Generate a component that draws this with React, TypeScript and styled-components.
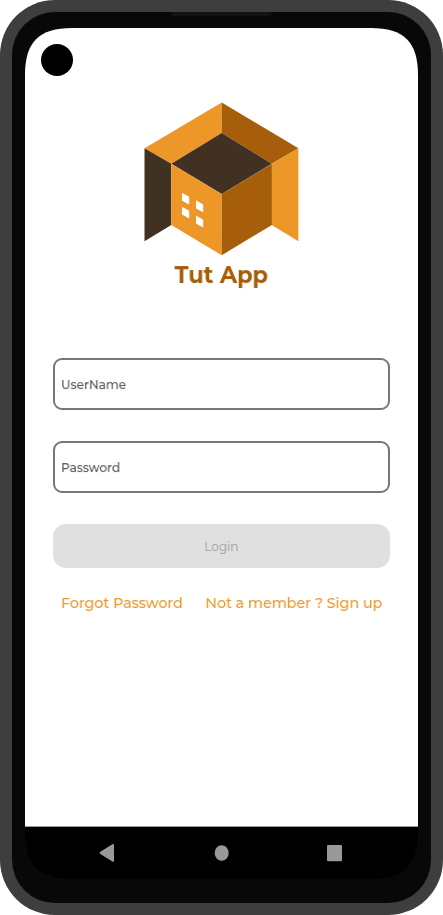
import React from "react";
import styled, { createGlobalStyle } from "styled-components";

const GlobalStyle = createGlobalStyle`
  *, *::before, *::after { box-sizing: border-box; }
  body { margin: 0; background: #fff; overflow: hidden; }
  button, input { font: inherit; margin: 0; }
`;

const Device = styled.div`
  position: relative;
  width: 443px;
  height: 915px;
  padding: 12px;
  border-radius: 55px;
  background: #3e3e3e;
  font-family: Montserrat, Inter, sans-serif;
`;

const Bezel = styled.div`
  height: 891px;
  padding: 16px 13px 24px;
  border-radius: 43px;
  background: #080808;
`;

const Speaker = styled.div`
  position: absolute;
  top: 12px;
  left: 170px;
  width: 103px;
  height: 4px;
  background: #121212;
  clip-path: polygon(0 0, 100% 0, calc(100% - 3px) 100%, 3px 100%);
`;

const Screen = styled.main`
  display: flex;
  flex-direction: column;
  height: 851px;
  clip-path: path("M0 47C0 14 14 0 47 0H346C379 0 393 14 393 47V804C393 837 379 851 346 851H47C14 851 0 837 0 804Z");
`;

const Camera = styled.div`
  position: absolute;
  top: 44px;
  left: 41px;
  width: 32px;
  height: 32px;
  border-radius: 50%;
  background: #000;
`;

const Content = styled.div`
  flex: 1;
  display: flex;
  flex-direction: column;
  padding: 74px 28px 0;
  background: #fff;
`;

const Logo = styled.svg`
  display: block;
  align-self: center;
  width: 155px;
  height: 154px;
`;

/* Slightly condensed lettering, anchored at the side it is aligned to. */
const Condensed = styled.span<{ $origin?: "left" | "center" | "right" }>`
  display: inline-block;
  white-space: nowrap;
  transform: scaleX(0.93);
  transform-origin: ${(p) => p.$origin ?? "center"} center;
  will-change: transform;
`;

const Title = styled.h1`
  margin: 4px 1px 0 0;
  height: 30px;
  text-align: center;
  font-size: 24.2px;
  line-height: 30px;
  font-weight: 700;
  color: #a65e0a;
`;

const Form = styled.form`
  display: flex;
  flex-direction: column;
  gap: 31px;
  margin-top: 68px;
`;

const Field = styled.label`
  display: flex;
  align-items: center;
  height: 52px;
  padding: 0 6px;
  border: 2px solid #77777b;
  border-radius: 9px;
  font-size: 13px;
  font-weight: 500;
  color: #555;
`;

const FieldInput = styled.input`
  flex: 1;
  min-width: 0;
  height: 100%;
  padding: 0;
  border: 0;
  outline: 0;
  background: transparent;
`;

const LoginButton = styled.button`
  height: 44px;
  border: 0;
  border-radius: 13px;
  background: #e0e0e0;
  font-size: 13px;
  font-weight: 400;
  color: #999;
`;

const Links = styled.nav`
  display: flex;
  justify-content: space-between;
  padding: 0 8px;
  margin-top: 25px;
`;

const Link = styled.a`
  min-width: 0;
  font-size: 15.3px;
  line-height: 20px;
  font-weight: 500;
  color: #ed9728;

  &:first-child { margin-right: -12px; }
`;

const NavBar = styled.footer`
  display: flex;
  height: 53px;
  border-top: 1px solid #999;
  background: #000;
`;

const NavIcons = styled.svg`
  display: block;
  width: 393px;
  height: 52px;
  fill: #999;
`;

export default function App() {
  return (
    <>
      <GlobalStyle />
      <Device>
        <Bezel>
          <Screen>
            <Content>
              <Logo viewBox="144 102 155 154" aria-hidden="true">
                <path fill="#ed9728" d="M221.7 102.5V133L171.3 163.7L144.5 148.3Z" />
                <path fill="#a65e0a" d="M221.7 102.5L298.4 148.3L271.7 163.7L221.7 133Z" />
                <path fill="#403122" d="M221.7 133L271.7 163.7L221.7 194L171.3 163.7Z M144.5 148.3L171.3 163.7V225L144.5 241.3Z" />
                <path fill="#ed9728" d="M171.3 163.7L221.7 194V255.2L171.3 225Z M298.4 148.3V241.3L271.7 225V163.7Z" />
                <path fill="#a65e0a" d="M221.7 194L271.9 163.7V225L221.7 255.2Z" />
                <path fill="#fff" d="M182 192.8L189.2 196.7V204.4L182 200.7Z M196 200.3L203.2 204.4V212.3L196 208.4Z M182 206.7L189.2 210.7V218.5L182 214.5Z M196 215.6L203.2 219.7V227.6L196 223.6Z" />
              </Logo>
              <Title>
                <Condensed>Tut App</Condensed>
              </Title>
              <Form onSubmit={(e) => e.preventDefault()}>
                <Field>
                  <Condensed $origin="left">UserName</Condensed>
                  <FieldInput />
                </Field>
                <Field>
                  <Condensed $origin="left">Password</Condensed>
                  <FieldInput type="password" />
                </Field>
                <LoginButton disabled>
                  <Condensed>Login</Condensed>
                </LoginButton>
              </Form>
              <Links>
                <Link>
                  <Condensed $origin="left">Forgot Password</Condensed>
                </Link>
                <Link>
                  <Condensed $origin="right">Not a member ? Sign up</Condensed>
                </Link>
              </Links>
            </Content>
            <NavBar>
              <NavIcons viewBox="25 827 393 52" aria-label="System navigation">
                <path d="M100.3 851.8L112.4 844.3Q114 843.5 114 845V861Q114 862.5 112.4 861.6L100.3 854Q99 853 100.3 851.8Z" />
                <ellipse cx="221.7" cy="853" rx="7" ry="7.7" />
                <rect x="327" y="845" width="15" height="16.2" rx="1" />
              </NavIcons>
            </NavBar>
          </Screen>
        </Bezel>
        <Speaker />
        <Camera />
      </Device>
    </>
  );
}
